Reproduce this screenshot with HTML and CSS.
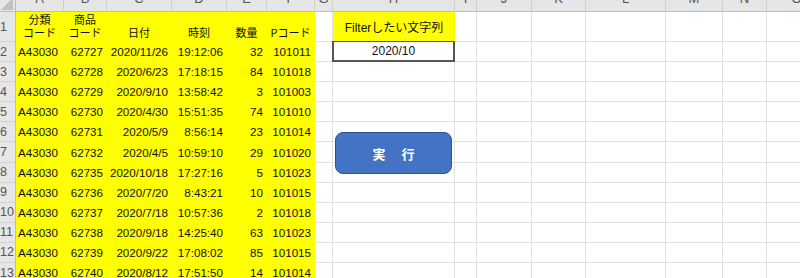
FILE: index.html
```html
<!DOCTYPE html>
<html lang="ja">
<head>
<meta charset="utf-8">
<title>Sheet</title>
<link rel="stylesheet" href="styles.css">
</head>
<body>
<div class="sheet">
  <div class="grid">
    <div class="corner"></div>
    <div class="ch">A</div><div class="ch">B</div><div class="ch">C</div><div class="ch">D</div><div class="ch">E</div><div class="ch">F</div><div class="ch">G</div><div class="ch">H</div><div class="ch">I</div><div class="ch">J</div><div class="ch">K</div><div class="ch">L</div><div class="ch">M</div><div class="ch">N</div><div class="ch">O</div>

    <div class="rh">1</div>
    <div class="y head">分類<br>コード</div><div class="y head">商品<br>コード</div><div class="y head">日付</div><div class="y head">時刻</div><div class="y head">数量</div><div class="y head">Pコード</div>
    <div class="c"></div><div class="y filter">Filterしたい文字列</div><div class="c"></div><div class="c"></div><div class="c"></div><div class="c"></div><div class="c"></div><div class="c"></div><div class="c"></div>

    <div class="rh">2</div>
    <div class="y l">A43030</div><div class="y r">62727</div><div class="y r">2020/11/26</div><div class="y r">19:12:06</div><div class="y r">32</div><div class="y r">101011</div>
    <div class="c"></div><div class="c input">2020/10</div><div class="c"></div><div class="c"></div><div class="c"></div><div class="c"></div><div class="c"></div><div class="c"></div><div class="c"></div>

    <div class="rh">3</div>
    <div class="y l">A43030</div><div class="y r">62728</div><div class="y r">2020/6/23</div><div class="y r">17:18:15</div><div class="y r">84</div><div class="y r">101018</div>
    <div class="c"></div><div class="c"></div><div class="c"></div><div class="c"></div><div class="c"></div><div class="c"></div><div class="c"></div><div class="c"></div><div class="c"></div>

    <div class="rh">4</div>
    <div class="y l">A43030</div><div class="y r">62729</div><div class="y r">2020/9/10</div><div class="y r">13:58:42</div><div class="y r">3</div><div class="y r">101003</div>
    <div class="c"></div><div class="c"></div><div class="c"></div><div class="c"></div><div class="c"></div><div class="c"></div><div class="c"></div><div class="c"></div><div class="c"></div>

    <div class="rh">5</div>
    <div class="y l">A43030</div><div class="y r">62730</div><div class="y r">2020/4/30</div><div class="y r">15:51:35</div><div class="y r">74</div><div class="y r">101010</div>
    <div class="c"></div><div class="c"></div><div class="c"></div><div class="c"></div><div class="c"></div><div class="c"></div><div class="c"></div><div class="c"></div><div class="c"></div>

    <div class="rh">6</div>
    <div class="y l">A43030</div><div class="y r">62731</div><div class="y r">2020/5/9</div><div class="y r">8:56:14</div><div class="y r">23</div><div class="y r">101014</div>
    <div class="c"></div><div class="c"></div><div class="c"></div><div class="c"></div><div class="c"></div><div class="c"></div><div class="c"></div><div class="c"></div><div class="c"></div>

    <div class="rh">7</div>
    <div class="y l">A43030</div><div class="y r">62732</div><div class="y r">2020/4/5</div><div class="y r">10:59:10</div><div class="y r">29</div><div class="y r">101020</div>
    <div class="c"></div><div class="c"></div><div class="c"></div><div class="c"></div><div class="c"></div><div class="c"></div><div class="c"></div><div class="c"></div><div class="c"></div>

    <div class="rh">8</div>
    <div class="y l">A43030</div><div class="y r">62735</div><div class="y r">2020/10/18</div><div class="y r">17:27:16</div><div class="y r">5</div><div class="y r">101023</div>
    <div class="c"></div><div class="c"></div><div class="c"></div><div class="c"></div><div class="c"></div><div class="c"></div><div class="c"></div><div class="c"></div><div class="c"></div>

    <div class="rh">9</div>
    <div class="y l">A43030</div><div class="y r">62736</div><div class="y r">2020/7/20</div><div class="y r">8:43:21</div><div class="y r">10</div><div class="y r">101015</div>
    <div class="c"></div><div class="c"></div><div class="c"></div><div class="c"></div><div class="c"></div><div class="c"></div><div class="c"></div><div class="c"></div><div class="c"></div>

    <div class="rh">10</div>
    <div class="y l">A43030</div><div class="y r">62737</div><div class="y r">2020/7/18</div><div class="y r">10:57:36</div><div class="y r">2</div><div class="y r">101018</div>
    <div class="c"></div><div class="c"></div><div class="c"></div><div class="c"></div><div class="c"></div><div class="c"></div><div class="c"></div><div class="c"></div><div class="c"></div>

    <div class="rh">11</div>
    <div class="y l">A43030</div><div class="y r">62738</div><div class="y r">2020/9/18</div><div class="y r">14:25:40</div><div class="y r">63</div><div class="y r">101023</div>
    <div class="c"></div><div class="c"></div><div class="c"></div><div class="c"></div><div class="c"></div><div class="c"></div><div class="c"></div><div class="c"></div><div class="c"></div>

    <div class="rh">12</div>
    <div class="y l">A43030</div><div class="y r">62739</div><div class="y r">2020/9/22</div><div class="y r">17:08:02</div><div class="y r">85</div><div class="y r">101015</div>
    <div class="c"></div><div class="c"></div><div class="c"></div><div class="c"></div><div class="c"></div><div class="c"></div><div class="c"></div><div class="c"></div><div class="c"></div>

    <div class="rh">13</div>
    <div class="y l">A43030</div><div class="y r">62740</div><div class="y r">2020/8/12</div><div class="y r">17:51:50</div><div class="y r">14</div><div class="y r">101014</div>
    <div class="c"></div><div class="c"></div><div class="c"></div><div class="c"></div><div class="c"></div><div class="c"></div><div class="c"></div><div class="c"></div><div class="c"></div>
  </div>
  <button class="run" type="button">実　行</button>
</div>
</body>
</html>
```

FILE: styles.css
```css
html, body {
  margin: 0;
  padding: 0;
  background: #ffffff;
}
body {
  width: 800px;
  height: 278px;
  overflow: hidden;
  font-family: "Liberation Sans", "Noto Sans CJK JP", sans-serif;
}
.sheet {
  position: relative;
  width: 800px;
  height: 278px;
  overflow: hidden;
}
.grid {
  display: grid;
  grid-template-columns: 16px 48px 43px 65px 55px 40px 48px 18px 122px 22px 55px 54px 80px 57px 44px 60px;
  grid-template-rows: 12px 30px repeat(12, 20.1px);
  width: 827px;
}
.grid > div {
  box-sizing: border-box;
  border-right: 1px solid #e1e1e1;
  border-bottom: 1px solid #e1e1e1;
  display: flex;
  align-items: center;
  font-size: 11.6px;
  color: #111;
  white-space: nowrap;
  overflow: visible;
}
.grid > .corner {
  background: #e6e6e6;
  border-right: 1px solid #bdbdbd;
  border-bottom: 1px solid #bdbdbd;
  position: relative;
}
.corner::after {
  content: "";
  position: absolute;
  right: 2px;
  bottom: 1px;
  width: 12px;
  height: 12px;
  background: linear-gradient(to bottom right, transparent 50%, #c2c2c2 50%);
}
.grid > .ch {
  background: #e6e6e6;
  border-right: 1px solid #cfcfcf;
  border-bottom: 1px solid #bdbdbd;
  justify-content: center;
  align-items: flex-start;
  color: #555;
  font-size: 13px;
  line-height: 13px;
  overflow: hidden;
}
.ch::before {
  content: "";
}
.grid > .ch {
  padding-top: 0;
}
.ch {
  text-indent: 0;
}
.grid > .ch {
  position: relative;
}
.grid > .ch {
  align-items: flex-end;
  padding-bottom: 6px;
}
.grid > .rh {
  background: #e6e6e6;
  border-right: 1px solid #bdbdbd;
  border-bottom: 1px solid #d2d2d2;
  color: #555;
  font-size: 12.5px;
  justify-content: flex-start;
  padding-left: 0;
  overflow: visible;
}
.grid > .y {
  background: #ffff00;
  border-color: #ffff00;
}
.grid > .l {
  justify-content: flex-start;
  padding-left: 2px;
}
.grid > .r {
  justify-content: flex-end;
  padding-right: 3px;
}
.grid > .head {
  font-family: "Noto Sans CJK JP", sans-serif;
  font-size: 11px;
  line-height: 13px;
  justify-content: center;
  align-items: flex-end;
  text-align: center;
  padding-bottom: 2px;
}
.grid > .filter {
  font-family: "Liberation Sans", "Noto Sans CJK JP", sans-serif;
  font-size: 12px;
  justify-content: center;
  border-left: 1px solid #ffff00;
}
.grid > .input {
  border: 2px solid #555;
  border-top-width: 1px;
  justify-content: center;
  font-size: 12px;
  margin-left: -1px;
  margin-top: -1px;
}
.run {
  position: absolute;
  left: 335px;
  top: 132px;
  width: 117px;
  height: 42px;
  box-sizing: border-box;
  border: 1px solid #2f528f;
  border-radius: 8px;
  background: #4472c4;
  color: #ffffff;
  font-family: "Noto Sans CJK JP", sans-serif;
  font-weight: bold;
  font-size: 13px;
  letter-spacing: 1.5px;
  padding: 0 0 0 1.5px;
  cursor: pointer;
}
```
